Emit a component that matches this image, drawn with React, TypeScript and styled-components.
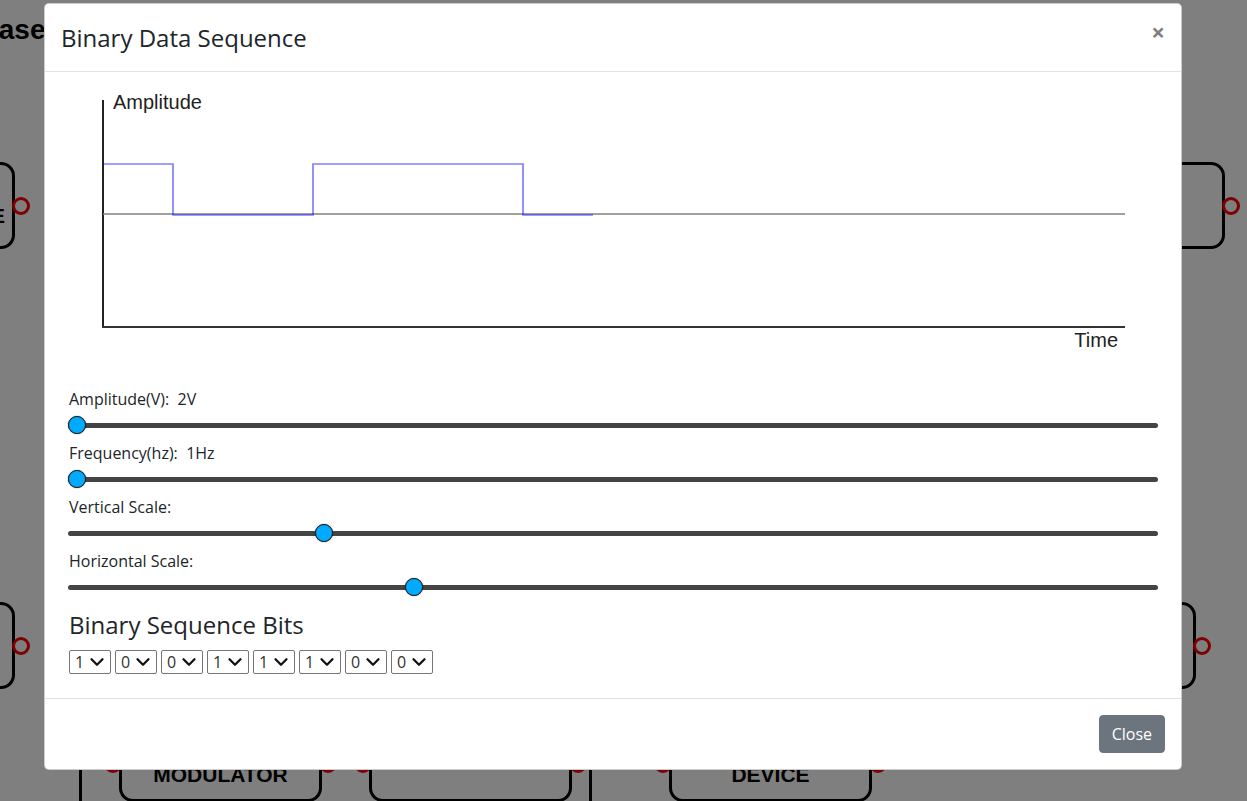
import React from 'react';
import styled, { createGlobalStyle } from 'styled-components';
import { ChevronDown } from 'lucide-react';

const GlobalStyle = createGlobalStyle`
  html, body {
    margin: 0;
    padding: 0;
    background: #fff;
    overflow: hidden;
  }
  body {
    font-family: "Open Sans", "Noto Sans", sans-serif;
    color: #212529;
  }
`;

const Page = styled.div`
  position: relative;
  width: 1247px;
  height: 801px;
  overflow: hidden;
  background: #fff;
`;

/* ---- diagram canvas behind the modal ---- */

const PageTitle = styled.div`
  position: absolute;
  left: -37px;
  top: 14px;
  font-family: "Liberation Sans", Arial, sans-serif;
  font-weight: 700;
  font-size: 28px;
  white-space: nowrap;
  color: #000;
`;

const Block = styled.div<{ $x: number; $y: number; $w: number; $h: number; $shift?: number }>`
  position: absolute;
  left: ${p => p.$x}px;
  top: ${p => p.$y}px;
  width: ${p => p.$w}px;
  height: ${p => p.$h}px;
  box-sizing: border-box;
  border: 3px solid #000;
  border-radius: 14px;
  display: flex;
  align-items: center;
  justify-content: center;
  padding-top: ${p => p.$shift ?? 0}px;
  font-family: "Liberation Sans", Arial, sans-serif;
  font-weight: 700;
  font-size: 21px;
  color: #000;
`;

const Port = styled.span<{ $side: 'left' | 'right'; $dy?: number }>`
  position: absolute;
  ${p => (p.$side === 'left' ? 'left: -18px;' : 'right: -18px;')}
  top: calc(50% - 9px + ${p => p.$dy ?? 0}px);
  width: 18px;
  height: 18px;
  box-sizing: border-box;
  border: 3.5px solid #ff0000;
  border-radius: 50%;
  background: #fff;
`;

const Wire = styled.div<{ $x: number }>`
  position: absolute;
  left: ${p => p.$x}px;
  top: 740px;
  width: 3px;
  height: 70px;
  background: #000;
`;

const Backdrop = styled.div`
  position: absolute;
  inset: 0;
  background: rgba(0, 0, 0, 0.5);
`;

/* ---- modal ---- */

const Dialog = styled.div`
  position: absolute;
  top: 3px;
  left: 44px;
  width: 1138px;
  box-sizing: border-box;
  background: #fff;
  border: 1px solid rgba(0, 0, 0, 0.2);
  border-radius: 5px;
  display: flex;
  flex-direction: column;
`;

const Header = styled.div`
  display: flex;
  align-items: flex-start;
  justify-content: space-between;
  padding: 16px;
  border-bottom: 1px solid #dee2e6;
`;

const Title = styled.h5`
  margin: 0;
  font-size: 24px;
  font-weight: 400;
  line-height: 35px;
  color: #212529;
`;

const CloseX = styled.button`
  padding: 16px;
  margin: -16px -16px -16px auto;
  background: transparent;
  border: 0;
  font-family: "Open Sans", sans-serif;
  font-size: 24px;
  font-weight: 700;
  line-height: 24px;
  color: #000;
  opacity: 0.5;
  cursor: pointer;
`;

const Body = styled.div`
  padding: 16px 16px 24px;
`;

const Chart = styled.svg`
  display: block;
  width: 1106px;
  height: 300px;
`;

const Controls = styled.div`
  padding: 0 7px;
`;

const SliderGroup = styled.div`
  display: flex;
  flex-direction: column;
`;

const SliderLabel = styled.label`
  padding-left: 1px;
  font-size: 16px;
  line-height: 22px;
  color: #212529;
  white-space: pre;
`;

const Range = styled.input`
  -webkit-appearance: none;
  appearance: none;
  width: 100%;
  height: 30px;
  margin: 0 0 2px;
  background: transparent;

  &::-webkit-slider-runnable-track {
    height: 5px;
    background: #444;
    border-radius: 3px;
  }

  &::-webkit-slider-thumb {
    -webkit-appearance: none;
    box-sizing: border-box;
    width: 18px;
    height: 18px;
    margin-top: -6.5px;
    border-radius: 50%;
    background: #00aaff;
    border: 1px solid #222;
    box-shadow: 0 0 1px #000;
  }
`;

const BitsHeading = styled.h4`
  margin: 6px 0 11px 1px;
  font-size: 24px;
  font-weight: 400;
  line-height: 29px;
  color: #212529;
`;

const BitsRow = styled.div`
  display: flex;
  gap: 4px;
  padding-left: 1px;
`;

const BitBox = styled.div`
  position: relative;
  width: 42px;
  height: 24px;
`;

const BitSelect = styled.select`
  -webkit-appearance: none;
  appearance: none;
  width: 100%;
  height: 100%;
  box-sizing: border-box;
  border: 1px solid #767676;
  border-radius: 2px;
  background: #fff;
  padding: 0 0 0 5px;
  font-family: "Open Sans", sans-serif;
  font-size: 16px;
  color: #333;
`;

const Chevron = styled(ChevronDown)`
  position: absolute;
  right: 3px;
  top: 1px;
  pointer-events: none;
  color: #111;
`;

const Footer = styled.div`
  display: flex;
  justify-content: flex-end;
  padding: 12px;
  border-top: 1px solid #dee2e6;
`;

const Button = styled.button`
  margin: 4px;
  padding: 6px 12px;
  font-family: "Open Sans", sans-serif;
  font-size: 16px;
  line-height: 24px;
  color: #fff;
  background: #6c757d;
  border: 1px solid #6c757d;
  border-radius: 4px;
  cursor: pointer;
`;

const sliders = [
  { label: 'Amplitude(V):  2V', value: 0 },
  { label: 'Frequency(hz):  1Hz', value: 0 },
  { label: 'Vertical Scale:', value: 230 },
  { label: 'Horizontal Scale:', value: 314 },
];

const bits = [1, 0, 0, 1, 1, 1, 0, 0];

const signal = '42,76 112,76 112,127 252,127 252,76 462,76 462,127 532,127';

export default function App() {
  return (
    <Page>
      <GlobalStyle />

      <PageTitle>Phase Shift Keying</PageTitle>

      <Block $x={-95} $y={162} $w={110} $h={87} $shift={20}>
        SOURCE
        <Port $side="right" />
      </Block>
      <Block $x={-190} $y={602} $w={205} $h={87}>
        FILTER
        <Port $side="right" />
      </Block>

      <Block $x={1020} $y={162} $w={205} $h={87}>
        CHANNEL
        <Port $side="right" />
      </Block>
      <Block $x={990} $y={602} $w={206} $h={87}>
        MIXER
        <Port $side="right" />
      </Block>

      <Wire $x={79} />
      <Block $x={119} $y={716} $w={203} $h={86} $shift={32}>
        MODULATOR
        <Port $side="left" $dy={5} />
        <Port $side="right" $dy={5} />
      </Block>
      <Block $x={369} $y={716} $w={203} $h={86} $shift={8}>
        INTEGRATOR
        <Port $side="left" $dy={5} />
        <Port $side="right" $dy={5} />
      </Block>
      <Wire $x={589} />
      <Block $x={669} $y={716} $w={203} $h={86} $shift={32}>
        DEVICE
        <Port $side="left" $dy={5} />
        <Port $side="right" $dy={5} />
      </Block>

      <Backdrop />

      <Dialog>
        <Header>
          <Title>Binary Data Sequence</Title>
          <CloseX aria-label="Close">×</CloseX>
        </Header>

        <Body>
          <Chart viewBox="0 0 1106 300">
            <line x1={42} y1={12} x2={42} y2={240} stroke="#222" strokeWidth={2} />
            <line x1={41} y1={239} x2={1064} y2={239} stroke="#333" strokeWidth={2} />
            <line x1={42} y1={126} x2={1064} y2={126} stroke="#808080" strokeWidth={1.5} />
            <polyline points={signal} fill="none" stroke="rgba(0,0,255,0.5)" strokeWidth={1.7} />
            <text
              x={52}
              y={21}
              fontFamily="Liberation Sans, Arial, sans-serif"
              fontSize={20}
              fill="#222"
            >
              Amplitude
            </text>
            <text
              x={1057}
              y={259}
              textAnchor="end"
              fontFamily="Liberation Sans, Arial, sans-serif"
              fontSize={20}
              fill="#222"
            >
              Time
            </text>
          </Chart>

          <Controls>
            {sliders.map(s => (
              <SliderGroup key={s.label}>
                <SliderLabel>{s.label}</SliderLabel>
                <Range type="range" min={0} max={1000} defaultValue={s.value} />
              </SliderGroup>
            ))}

            <BitsHeading>Binary Sequence Bits</BitsHeading>
            <BitsRow>
              {bits.map((b, i) => (
                <BitBox key={i}>
                  <BitSelect defaultValue={String(b)}>
                    <option value="0">0</option>
                    <option value="1">1</option>
                  </BitSelect>
                  <Chevron size={22} strokeWidth={2.5} />
                </BitBox>
              ))}
            </BitsRow>
          </Controls>
        </Body>

        <Footer>
          <Button>Close</Button>
        </Footer>
      </Dialog>
    </Page>
  );
}
